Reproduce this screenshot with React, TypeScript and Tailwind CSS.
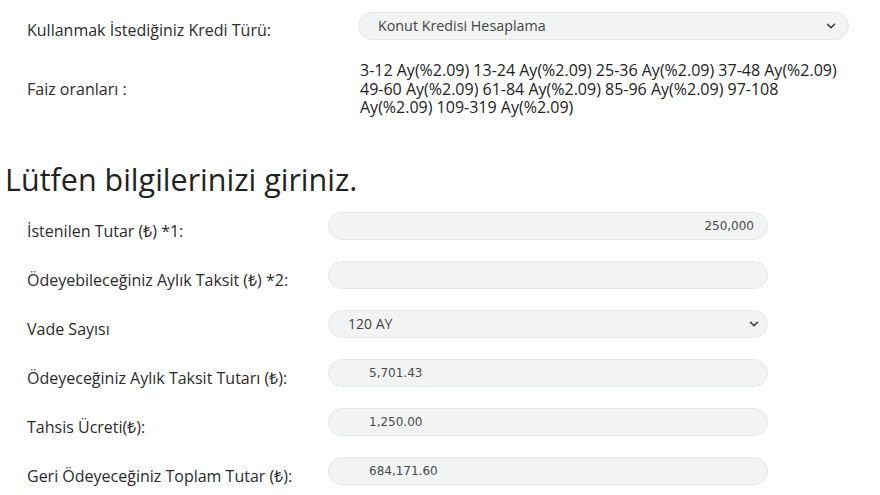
import { ChevronDown } from 'lucide-react'

const rates =
  '3-12 Ay(%2.09) 13-24 Ay(%2.09) 25-36 Ay(%2.09) 37-48 Ay(%2.09) 49-60 Ay(%2.09) 61-84 Ay(%2.09) 85-96 Ay(%2.09) 97-108 Ay(%2.09) 109-319 Ay(%2.09)'

const field =
  'h-[28px] w-[440px] rounded-full border border-[#e4e8e8] bg-[#f2f4f4] flex items-center text-[#4a4a4a]'

function Row({ label, children }: { label: string; children: React.ReactNode }) {
  return (
    <div className="flex items-start h-[28px]">
      <div className="w-[301px] pt-[8px] text-[16px] leading-[22px] text-[#2b2b2b]">{label}</div>
      {children}
    </div>
  )
}

function Value({ text, right = false }: { text?: string; right?: boolean }) {
  return (
    <div className={`${field} ${right ? 'justify-end pr-[13px]' : 'pl-[40px]'}`}>
      <span className="text-[12px] font-['DejaVu_Sans',sans-serif]">{text}</span>
    </div>
  )
}

export default function App() {
  return (
    <div className="w-[880px] h-[495px] bg-white overflow-hidden font-['Open_Sans',sans-serif] text-[#2b2b2b]">
      {/* Kredi türü */}
      <div className="pt-[12px] pl-[27px] flex items-start h-[40px]">
        <div className="w-[331px] pt-[7px] text-[16px] leading-[22px]">Kullanmak İstediğiniz Kredi Türü:</div>
        <div className="h-[28px] w-[491px] rounded-full border border-[#e4e8e8] bg-[#f2f4f4] flex items-center justify-between pl-[19px] pr-[10px]">
          <span className="text-[14.3px] text-[#444]">Konut Kredisi Hesaplama</span>
          <ChevronDown size={14} strokeWidth={2.5} className="text-[#333]" />
        </div>
      </div>

      {/* Faiz oranları */}
      <div className="mt-[21px] pl-[27px] flex items-center">
        <div className="w-[333px] text-[16px]">Faiz oranları :</div>
        <div className="w-[489px] text-[16px] leading-[18.5px] text-[#222]">{rates}</div>
      </div>

      <h2 className="mt-[44px] pl-[5px] text-[30.5px] leading-[36px] text-[#222]">
        Lütfen bilgilerinizi giriniz.
      </h2>

      <div className="mt-[15px] pl-[27px] flex flex-col gap-[21px]">
        <Row label="İstenilen Tutar (₺) *1:">
          <Value text="250,000" right />
        </Row>
        <Row label="Ödeyebileceğiniz Aylık Taksit (₺) *2:">
          <Value />
        </Row>
        <Row label="Vade Sayısı">
          <div className={`${field} justify-between pl-[19px] pr-[6px]`}>
            <span className="text-[14px] text-[#444]">120 AY</span>
            <ChevronDown size={14} strokeWidth={2.5} className="text-[#333]" />
          </div>
        </Row>
        <Row label="Ödeyeceğiniz Aylık Taksit Tutarı (₺):">
          <Value text="5,701.43" />
        </Row>
        <Row label="Tahsis Ücreti(₺):">
          <Value text="1,250.00" />
        </Row>
        <Row label="Geri Ödeyeceğiniz Toplam Tutar (₺):">
          <Value text="684,171.60" />
        </Row>
      </div>
    </div>
  )
}
